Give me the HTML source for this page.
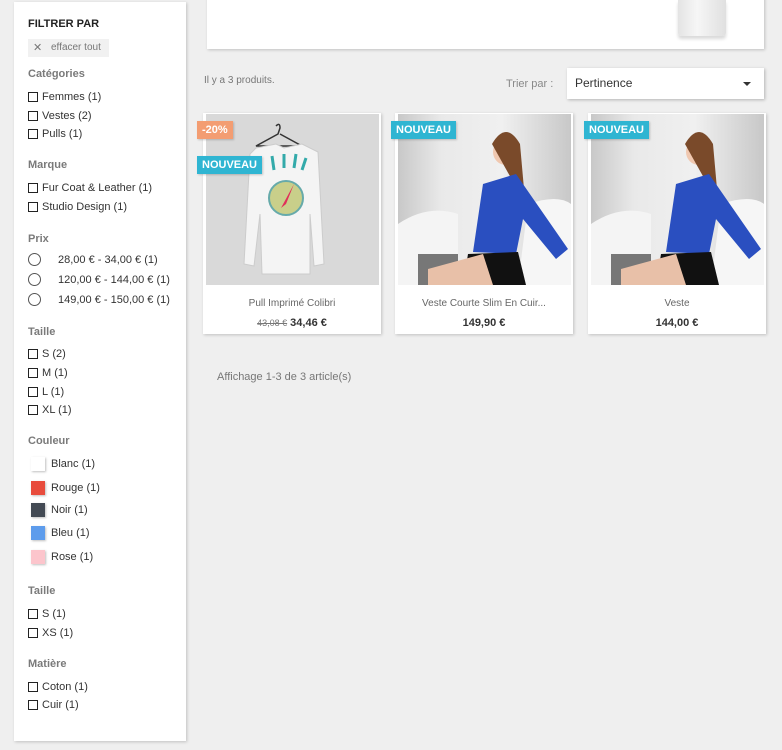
<!DOCTYPE html>
<html><head><meta charset="utf-8"><style>
*{margin:0;padding:0;box-sizing:border-box}
body{width:782px;height:750px;background:#efefef;font-family:"Liberation Sans",sans-serif;font-size:11px;color:#333;position:relative;overflow:hidden}
.a{position:absolute;white-space:nowrap;line-height:14px}
.h{font-weight:bold;color:#7a7a7a}
.cb{position:absolute;width:10px;height:10px;border:1.5px solid #222;background:#fff}
.rd{position:absolute;width:13px;height:13px;border:1.3px solid #555;border-radius:50%}
.sw{position:absolute;width:14px;height:14px;box-shadow:1px 1px 2px rgba(0,0,0,.25)}
.card{position:absolute;top:113px;width:178px;height:221px;background:#fff;box-shadow:1px 1px 3px rgba(0,0,0,.2)}
.img{position:absolute;left:3px;top:1px;width:173px;height:171px}
.nm{position:absolute;top:185px;width:100%;text-align:center;font-size:10px;color:#666}
.pr{position:absolute;top:204px;width:100%;text-align:center;font-size:11px;font-weight:bold;color:#333}
.badge{position:absolute;color:#fff;font-weight:bold;font-size:11px;padding:3px 5px;background:#2fb5d2;box-shadow:1px 1px 2px rgba(0,0,0,.2)}
.woman{background:linear-gradient(90deg,#c8c8c8 0%,#e9e9e9 25%,#f0f0f0 60%,#c8c8c8 100%)}
</style></head><body>
<div style="position:absolute;left:14px;top:2px;width:172px;height:739px;background:#fff;box-shadow:1px 1px 3px rgba(0,0,0,.2)"></div>
<div class="a" style="left:28px;top:17px;font-weight:bold;color:#222">FILTRER PAR</div>
<div style="position:absolute;left:28px;top:39px;width:81px;height:18px;background:#f1f1f1"></div>
<div class="a" style="left:33px;top:41px;color:#777">✕</div>
<div class="a" style="left:51px;top:41px;color:#777;font-size:10px">effacer tout</div>

<div class="a h" style="left:28px;top:67px">Catégories</div>
<div class="cb" style="left:28px;top:92px"></div><div class="a" style="left:42px;top:90px">Femmes (1)</div>
<div class="cb" style="left:28px;top:111px"></div><div class="a" style="left:42px;top:109px">Vestes (2)</div>
<div class="cb" style="left:28px;top:129px"></div><div class="a" style="left:42px;top:127px">Pulls (1)</div>

<div class="a h" style="left:28px;top:158px">Marque</div>
<div class="cb" style="left:28px;top:183px"></div><div class="a" style="left:42px;top:181px">Fur Coat &amp; Leather (1)</div>
<div class="cb" style="left:28px;top:202px"></div><div class="a" style="left:42px;top:200px">Studio Design (1)</div>

<div class="a h" style="left:28px;top:232px">Prix</div>
<div class="rd" style="left:28px;top:253px"></div><div class="a" style="left:58px;top:253px">28,00 € - 34,00 € (1)</div>
<div class="rd" style="left:28px;top:273px"></div><div class="a" style="left:58px;top:273px">120,00 € - 144,00 € (1)</div>
<div class="rd" style="left:28px;top:293px"></div><div class="a" style="left:58px;top:293px">149,00 € - 150,00 € (1)</div>

<div class="a h" style="left:28px;top:325px">Taille</div>
<div class="cb" style="left:28px;top:349px"></div><div class="a" style="left:42px;top:347px">S (2)</div>
<div class="cb" style="left:28px;top:368px"></div><div class="a" style="left:42px;top:366px">M (1)</div>
<div class="cb" style="left:28px;top:387px"></div><div class="a" style="left:42px;top:385px">L (1)</div>
<div class="cb" style="left:28px;top:405px"></div><div class="a" style="left:42px;top:403px">XL (1)</div>

<div class="a h" style="left:28px;top:434px">Couleur</div>
<div class="sw" style="left:31px;top:457px;background:#fff"></div><div class="a" style="left:51px;top:457px">Blanc (1)</div>
<div class="sw" style="left:31px;top:481px;background:#e84c3d"></div><div class="a" style="left:51px;top:481px">Rouge (1)</div>
<div class="sw" style="left:31px;top:503px;background:#434a54"></div><div class="a" style="left:51px;top:503px">Noir (1)</div>
<div class="sw" style="left:31px;top:526px;background:#5d9cec"></div><div class="a" style="left:51px;top:526px">Bleu (1)</div>
<div class="sw" style="left:31px;top:550px;background:#fcc5cc"></div><div class="a" style="left:51px;top:550px">Rose (1)</div>

<div class="a h" style="left:28px;top:584px">Taille</div>
<div class="cb" style="left:28px;top:609px"></div><div class="a" style="left:42px;top:607px">S (1)</div>
<div class="cb" style="left:28px;top:628px"></div><div class="a" style="left:42px;top:626px">XS (1)</div>

<div class="a h" style="left:28px;top:657px">Matière</div>
<div class="cb" style="left:28px;top:682px"></div><div class="a" style="left:42px;top:680px">Coton (1)</div>
<div class="cb" style="left:28px;top:700px"></div><div class="a" style="left:42px;top:698px">Cuir (1)</div>

<!-- top box -->
<div style="position:absolute;left:207px;top:-5px;width:557px;height:54px;background:#fff;box-shadow:1px 1px 3px rgba(0,0,0,.2)"></div>
<div style="position:absolute;left:678px;top:0;width:48px;height:36px;background:linear-gradient(90deg,#e4e4e4,#f6f6f6 40%,#e0e0e0);border-radius:0 0 3px 3px;box-shadow:0 3px 3px rgba(0,0,0,.15)"></div>

<div class="a" style="left:204px;top:74px;font-size:10px;color:#777">Il y a 3 produits.</div>
<div class="a" style="left:506px;top:77px;color:#888">Trier par :</div>
<div style="position:absolute;left:567px;top:68px;width:197px;height:31px;background:#fff;box-shadow:1px 1px 3px rgba(0,0,0,.25)"></div>
<div class="a" style="left:575px;top:76px;font-size:12px;color:#333">Pertinence</div>
<div style="position:absolute;left:743px;top:82px;border-left:4px solid transparent;border-right:4px solid transparent;border-top:4px solid #333"></div>

<div class="card" style="left:203px">
 <div class="img" style="background:#d9d9d9">
  <svg width="173" height="171" viewBox="0 0 173 171">
   <path d="M70 12 q4 -4 4 2 l-2 6 L50 32 h46 L74 20" fill="none" stroke="#333" stroke-width="1.5"/>
   <path d="M50 34 L70 30 L78 34 L96 30 L112 38 L118 150 L108 152 L104 100 L104 160 L56 160 L54 100 L48 152 L38 150 L44 40 Z" fill="#f4f4f4" stroke="#ccc"/>
   <circle cx="80" cy="84" r="17" fill="#c9cf8a" stroke="#6aa" stroke-width="2"/>
   <path d="M75 94 L88 70 L80 90" fill="#e0305a"/>
   <path d="M66 42 l2 14 M78 40 l0 14 M90 40 l-2 14 M100 44 l-4 12" stroke="#3aa" stroke-width="3"/>
  </svg>
 </div>
 <div class="nm">Pull Imprimé Colibri</div>
 <div class="pr"><span style="font-size:9px;color:#777;text-decoration:line-through;font-weight:normal">43,08 €</span> 34,46 €</div>
</div>
<div class="badge" style="left:197px;top:121px;background:#f39d72">-20%</div>
<div class="badge" style="left:197px;top:156px">NOUVEAU</div>

<div class="card" style="left:395px">
 <div class="img woman">
  <svg width="173" height="171"><path d="M0 110 q30 -20 60 -10 L60 171 L0 171Z" fill="#f4f4f4"/><path d="M130 90 q30 -10 43 0 L173 171 L120 171Z" fill="#f6f6f6"/><rect x="20" y="140" width="40" height="31" fill="#777"/><circle cx="108" cy="38" r="13" fill="#f0c8b0"/><path d="M94 30 q14 -24 28 0 l4 45 -8 -2z" fill="#7a4a2a"/><path d="M85 70 L118 60 L170 135 L158 145 L125 105 L118 140 L75 138 Z" fill="#2a4fc0"/><path d="M70 140 L120 138 L128 171 L65 171Z" fill="#111"/><path d="M30 155 L85 140 L95 171 L30 171Z" fill="#e8c0a8"/></svg>
 </div>
 <div class="nm">Veste Courte Slim En Cuir...</div>
 <div class="pr">149,90 €</div>
</div>
<div class="badge" style="left:391px;top:121px">NOUVEAU</div>

<div class="card" style="left:588px">
 <div class="img woman">
  <svg width="173" height="171"><path d="M0 110 q30 -20 60 -10 L60 171 L0 171Z" fill="#f4f4f4"/><path d="M130 90 q30 -10 43 0 L173 171 L120 171Z" fill="#f6f6f6"/><rect x="20" y="140" width="40" height="31" fill="#777"/><circle cx="108" cy="38" r="13" fill="#f0c8b0"/><path d="M94 30 q14 -24 28 0 l4 45 -8 -2z" fill="#7a4a2a"/><path d="M85 70 L118 60 L170 135 L158 145 L125 105 L118 140 L75 138 Z" fill="#2a4fc0"/><path d="M70 140 L120 138 L128 171 L65 171Z" fill="#111"/><path d="M30 155 L85 140 L95 171 L30 171Z" fill="#e8c0a8"/></svg>
 </div>
 <div class="nm">Veste</div>
 <div class="pr">144,00 €</div>
</div>
<div class="badge" style="left:584px;top:121px">NOUVEAU</div>

<div class="a" style="left:217px;top:370px;color:#777">Affichage 1-3 de 3 article(s)</div>
</body></html>
